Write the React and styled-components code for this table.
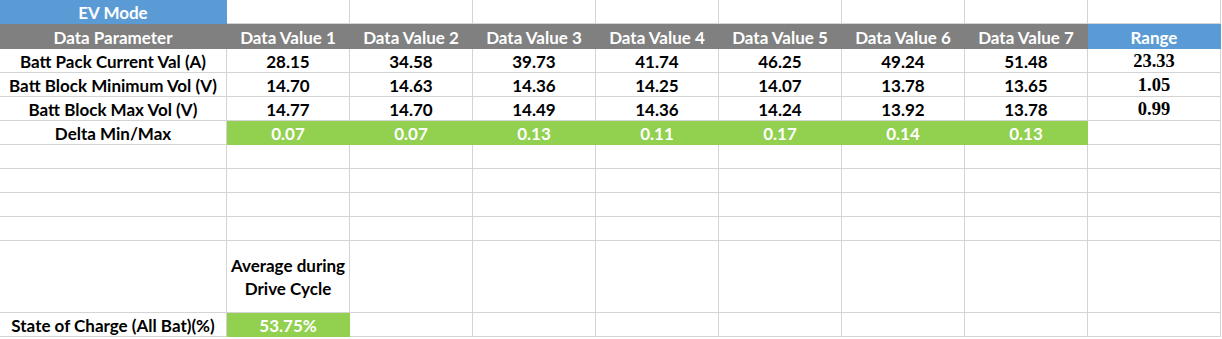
import React from "react"
import styled, { createGlobalStyle } from "styled-components"

const GRID = "#d4d4d4"
const BLUE = "#5b9bd5"
const GRAY = "#808080"
const GREEN = "#92d050"

const GlobalStyle = createGlobalStyle`
  html, body {
    margin: 0;
    padding: 0;
    background: #ffffff;
  }
  body {
    font-family: Lato, "Liberation Sans", sans-serif;
  }
`

const Sheet = styled.div`
  display: grid;
  grid-template-columns: 227px repeat(7, 123px) 133px;
  grid-template-rows: 24px 25px repeat(8, 24px) 72px 24px;
  width: 1221px;
`

const Cell = styled.div`
  box-sizing: border-box;
  display: flex;
  align-items: center;
  justify-content: center;
  text-align: center;
  padding-top: 2px;
  border-right: 1px solid ${p => p.$fill || GRID};
  border-bottom: 1px solid ${p => p.$fill || GRID};
  background: ${p => p.$fill || "transparent"};
  color: ${p => (p.$fill ? "#ffffff" : "#000000")};
  font-family: ${p =>
    p.$serif ? '"Liberation Serif", serif' : 'Lato, "Liberation Sans", sans-serif'};
  font-size: ${p => (p.$serif ? "18.5px" : "17px")};
  font-weight: 700;
  line-height: 23px;
  white-space: nowrap;
`

const Note = styled(Cell)`
  flex-direction: column;
  white-space: normal;
  padding-top: 0;
`

const values = [
  { label: "Batt Pack Current Val (A)", data: ["28.15", "34.58", "39.73", "41.74", "46.25", "49.24", "51.48"], range: "23.33" },
  { label: "Batt Block Minimum Vol (V)", data: ["14.70", "14.63", "14.36", "14.25", "14.07", "13.78", "13.65"], range: "1.05" },
  { label: "Batt Block Max Vol (V)", data: ["14.77", "14.70", "14.49", "14.36", "14.24", "13.92", "13.78"], range: "0.99" },
]

const delta = ["0.07", "0.07", "0.13", "0.11", "0.17", "0.14", "0.13"]

const Blank = ({ count }) =>
  Array.from({ length: count }, (_, i) => <Cell key={i} />)

export default function App() {
  return (
    <>
      <GlobalStyle />
      <Sheet>
        <Cell $fill={BLUE}>EV Mode</Cell>
        <Blank count={8} />

        <Cell $fill={GRAY}>Data Parameter</Cell>
        {[1, 2, 3, 4, 5, 6, 7].map(n => (
          <Cell key={n} $fill={GRAY}>Data Value {n}</Cell>
        ))}
        <Cell $fill={BLUE}>Range</Cell>

        {values.map(row => (
          <React.Fragment key={row.label}>
            <Cell>{row.label}</Cell>
            {row.data.map((v, i) => (
              <Cell key={i}>{v}</Cell>
            ))}
            <Cell $serif>{row.range}</Cell>
          </React.Fragment>
        ))}

        <Cell>Delta Min/Max</Cell>
        {delta.map((v, i) => (
          <Cell key={i} $fill={GREEN}>{v}</Cell>
        ))}
        <Cell />

        <Blank count={36} />

        <Cell />
        <Note>
          <span>Average during</span>
          <span>Drive Cycle</span>
        </Note>
        <Blank count={7} />

        <Cell>State of Charge (All Bat)(%)</Cell>
        <Cell $fill={GREEN}>53.75%</Cell>
        <Blank count={7} />
      </Sheet>
    </>
  )
}
